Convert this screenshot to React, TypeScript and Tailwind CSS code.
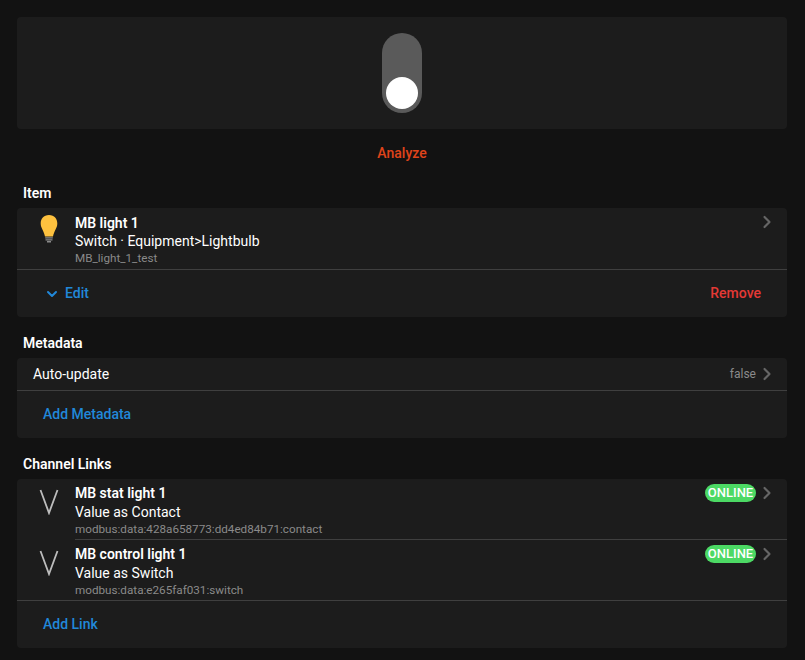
import { ChevronDown, ChevronRight } from 'lucide-react';

const font = { fontFamily: 'Roboto, "Noto Sans", sans-serif' };

const Chevron = () => <ChevronRight className="-m-[1px] h-[20px] w-[20px] text-[#666666]" strokeWidth={2.600} />;

const SectionTitle = ({ children }: { children: string }) => (
  <div className="mx-[6px] flex h-[15px] items-center text-[14px] font-semibold leading-none text-white">{children}</div>
);

const Bulb = () => (
  <svg width="20" height="30" viewBox="0 0 20 30">
    <path d="M10 1C4.600 1 1.700 4.800 1.700 9.600c0 4.600 3.200 7.200 4.300 13h8c1.100-5.800 4.300-8.400 4.300-13C18.300 4.800 15.400 1 10 1z" fill="#fdc13f" />
    <path d="M6.200 23.200h7.600v1.400H6.200zM6.500 25.200h7v1.300h-7zM8 27.100h4v1.300H8z" fill="#8a8a8a" />
  </svg>
);

const ChannelRow = ({ name, type, uid, inset }: { name: string; type: string; uid: string; inset?: boolean }) => (
  <div className={inset ? 'flex h-[61px]' : 'flex h-[61px] border-b border-[#3f3f3f]'}>
    <div className="flex w-[58px] shrink-0 justify-center pl-[6px] pt-[10px]">
      <svg width="20" height="26" viewBox="0 0 20 26" fill="none" stroke="#bdbdbd" strokeWidth="1.800">
        <path d="M1.500 1 10 24 18.500 1" />
      </svg>
    </div>
    <div className={inset ? 'relative flex-1 border-b border-[#3f3f3f] pt-[5px]' : 'relative flex-1 pt-[5px]'}>
      <div className="text-[14px] font-semibold leading-[18px] text-white">{name}</div>
      <div className="mt-[1px] text-[14px] leading-[18px] text-white">{type}</div>
      <div className="text-[11.700px] leading-[16px] text-[#8a8a8a]">{uid}</div>
      <div className="absolute right-[11px] top-[5px] flex items-center gap-[2px]">
        <span className="flex h-[18px] w-[51px] items-center justify-center rounded-full bg-[#4cd964] text-[13px] font-medium text-white">ONLINE</span>
        <Chevron />
      </div>
    </div>
  </div>
);

export default function App() {
  return (
    <div style={font} className="h-[660px] w-[805px] overflow-hidden bg-[#121212] pl-[17px] pr-[18px] pt-[17px]">
      <div className="flex h-[112px] items-center justify-center rounded bg-[#1c1c1c]">
        <div className="flex h-[80px] w-[40px] items-end justify-center rounded-full bg-[#5a5a5a] pb-[4px]">
          <div className="h-[32px] w-[32px] rounded-full bg-white" />
        </div>
      </div>

      <div className="mt-[15px] flex h-[18px] items-center justify-center text-[14px] font-medium text-[#e0441a]">Analyze</div>

      <div className="mt-[23px]"><SectionTitle>Item</SectionTitle></div>
      <div className="mt-[8px] h-[109px] rounded bg-[#1c1c1c]">
        <div className="relative flex h-[62px] border-b border-[#3f3f3f]">
          <div className="flex w-[58px] shrink-0 justify-center pl-[6px] pt-[6px]"><Bulb /></div>
          <div className="pt-[6px]">
            <div className="text-[14px] font-semibold leading-[18px] text-white">MB light 1</div>
            <div className="text-[14px] leading-[18px] text-white">Switch · Equipment&gt;Lightbulb</div>
            <div className="text-[11.700px] leading-[16px] text-[#8a8a8a]">MB_light_1_test</div>
          </div>
          <div className="absolute right-[11px] top-[5px]"><Chevron /></div>
        </div>
        <div className="flex h-[47px] items-center justify-between pl-[27px] pr-[26px] text-[14px] font-medium">
          <span className="flex items-center gap-[5px] text-[#2188d9]">
            <ChevronDown className="h-[16px] w-[16px]" strokeWidth={3} />
            Edit
          </span>
          <span className="text-[#e53935]">Remove</span>
        </div>
      </div>

      <div className="mt-[18px]"><SectionTitle>Metadata</SectionTitle></div>
      <div className="mt-[8px] h-[80px] rounded bg-[#1c1c1c]">
        <div className="flex h-[33px] items-center justify-between border-b border-[#3f3f3f] pl-[16px] pr-[11px] text-[14px] text-white">
          <span className="pt-[1px]">Auto-update</span>
          <span className="flex items-center gap-[2px] text-[12px] text-[#8a8a8a]">false<Chevron /></span>
        </div>
        <div className="flex h-[47px] items-center pl-[26px] text-[14px] font-medium text-[#2188d9]">Add Metadata</div>
      </div>

      <div className="mt-[18px]"><SectionTitle>Channel Links</SectionTitle></div>
      <div className="mt-[8px] h-[169px] rounded bg-[#1c1c1c]">
        <ChannelRow inset name="MB stat light 1" type="Value as Contact" uid="modbus:data:428a658773:dd4ed84b71:contact" />
        <ChannelRow name="MB control light 1" type="Value as Switch" uid="modbus:data:e265faf031:switch" />
        <div className="flex h-[47px] items-center pl-[26px] text-[14px] font-medium text-[#2188d9]">Add Link</div>
      </div>
    </div>
  );
}
